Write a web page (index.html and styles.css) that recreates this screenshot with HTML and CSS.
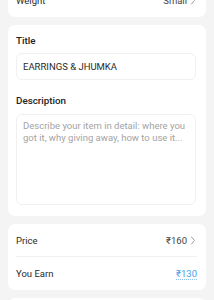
FILE: index.html
```html
<!DOCTYPE html>
<html>
<head>
<meta charset="utf-8">
<link rel="stylesheet" href="styles.css">
</head>
<body>
<div class="page">
  <section class="card">
    <div class="row">
      <span class="row-label">Weight</span>
      <span class="row-value">Small
        <svg class="chev" width="7" height="9" viewBox="0 0 7 9"><polyline points="1.5,1 4.5,4.5 1.5,8" fill="none" stroke="#9a9a9a" stroke-width="1" stroke-linecap="round" stroke-linejoin="round"/></svg>
      </span>
    </div>
  </section>

  <section class="card form-card">
    <div class="label">Title</div>
    <div class="input">EARRINGS &amp; JHUMKA</div>
    <div class="label label-gap">Description</div>
    <div class="textarea">Describe your item in detail: where you got it, why giving away, how to use it...</div>
  </section>

  <section class="card">
    <div class="row row-divided">
      <span class="row-label">Price</span>
      <span class="row-value">₹160
        <svg class="chev" width="7" height="9" viewBox="0 0 7 9"><polyline points="1.5,1 4.5,4.5 1.5,8" fill="none" stroke="#9a9a9a" stroke-width="1" stroke-linecap="round" stroke-linejoin="round"/></svg>
      </span>
    </div>
    <div class="row">
      <span class="row-label">You Earn</span>
      <span class="earn">₹130</span>
    </div>
  </section>

  <section class="card spacer"></section>
</div>
</body>
</html>
```

FILE: styles.css
```css
* { box-sizing: border-box; }
html, body {
  margin: 0;
  padding: 0;
  background: #f4f4f5;
  font-family: Roboto, "Liberation Sans", Arial, sans-serif;
  color: #222;
  overflow: hidden;
}
.page {
  display: flex;
  flex-direction: column;
  gap: 8px;
  padding: 0 8px;
  margin-top: -16px;
}
.card {
  background: #fff;
  border-radius: 7px;
  padding: 0 9px 0 8px;
}
.row {
  height: 33px;
  display: flex;
  align-items: center;
  justify-content: space-between;
  font-size: 9.5px;
  color: #2a2a2a;
}
.row-divided {
  border-bottom: 1px solid #f2f2f2;
}
.row-label { color: #2a2a2a; }
.row-value {
  display: flex;
  align-items: center;
  gap: 3px;
  color: #444;
}
.chev { display: block; }
.earn {
  color: #4a9fe6;
  text-decoration: underline dotted #8cc2ef;
  text-underline-offset: 2px;
}
.form-card {
  padding: 9px 10px 11px 8px;
}
.label {
  font-size: 9.8px;
  line-height: 14px;
  font-weight: 500;
  color: #222;
  margin-bottom: 5px;
}
.label-gap { margin-top: 14px; margin-bottom: 6px; }
.input {
  height: 27px;
  border: 1px solid #f0f0f0;
  border-radius: 6px;
  display: flex;
  align-items: center;
  padding: 0 6px;
  font-size: 9.5px;
  color: #2a2a2a;
}
.textarea {
  height: 91px;
  border: 1px solid #f0f0f0;
  border-radius: 6px;
  padding: 5px 6px;
  font-size: 9.5px;
  line-height: 12px;
  color: #a3a3a3;
}
.spacer { height: 40px; }
```
